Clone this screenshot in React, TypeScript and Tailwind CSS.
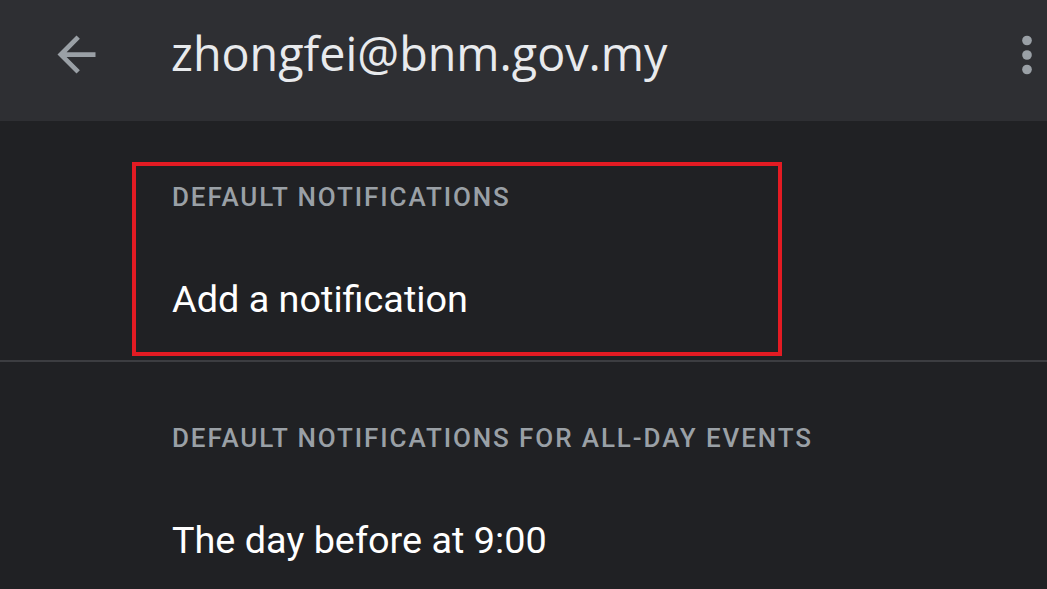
import React from 'react'

const ArrowBack = () => (
  <svg width="57" height="57" viewBox="0 0 24 24" fill="#9aa0a6" className="shrink-0">
    <path d="M20 11H7.83l5.59-5.59L12 4l-8 8 8 8 1.41-1.41L7.83 13H20v-2z" />
  </svg>
)

const MoreVert = () => (
  <svg width="58" height="58" viewBox="0 0 24 24" fill="#9aa0a6" className="shrink-0 -mr-[9px]">
    <circle cx="12" cy="6" r="2" />
    <circle cx="12" cy="12" r="2" />
    <circle cx="12" cy="18" r="2" />
  </svg>
)

const App = () => {
  return (
    <div className="w-[1047px] h-[589px] overflow-hidden bg-[#202124] font-['Roboto',sans-serif]">
      <header className="h-[121px] bg-[#2e2f33] flex items-start pt-[26px] pl-[48px]">
        <ArrowBack />
        <h1 className="ml-[66px] -mt-[3px] text-[46.7px] leading-[60px] text-[#e8eaed] font-['Open_Sans',sans-serif] flex-1">
          zhongfei@bnm.gov.my
        </h1>
        <MoreVert />
      </header>

      <section className="pt-[41px] pb-[4px]">
        <div className="ml-[132px] w-[650px] h-[194px] border-4 border-[#e31b23] pl-[36px] pt-[15px]">
          <div className="text-[26px] leading-[32px] tracking-[0.073em] font-medium text-[#9aa0a6]">
            DEFAULT NOTIFICATIONS
          </div>
          <div className="mt-[62px] text-[37.8px] leading-[48px] text-white">Add a notification</div>
        </div>
      </section>
      <div className="h-[2px] bg-[#3c3d41]" />

      <section className="pl-[172px] pt-[60px]">
        <div className="text-[26px] leading-[32px] tracking-[0.073em] font-medium text-[#9aa0a6]">
          DEFAULT NOTIFICATIONS FOR ALL-DAY EVENTS
        </div>
        <div className="mt-[62px] text-[37.8px] leading-[48px] text-white">The day before at 9:00</div>
      </section>
    </div>
  )
}

export default App
